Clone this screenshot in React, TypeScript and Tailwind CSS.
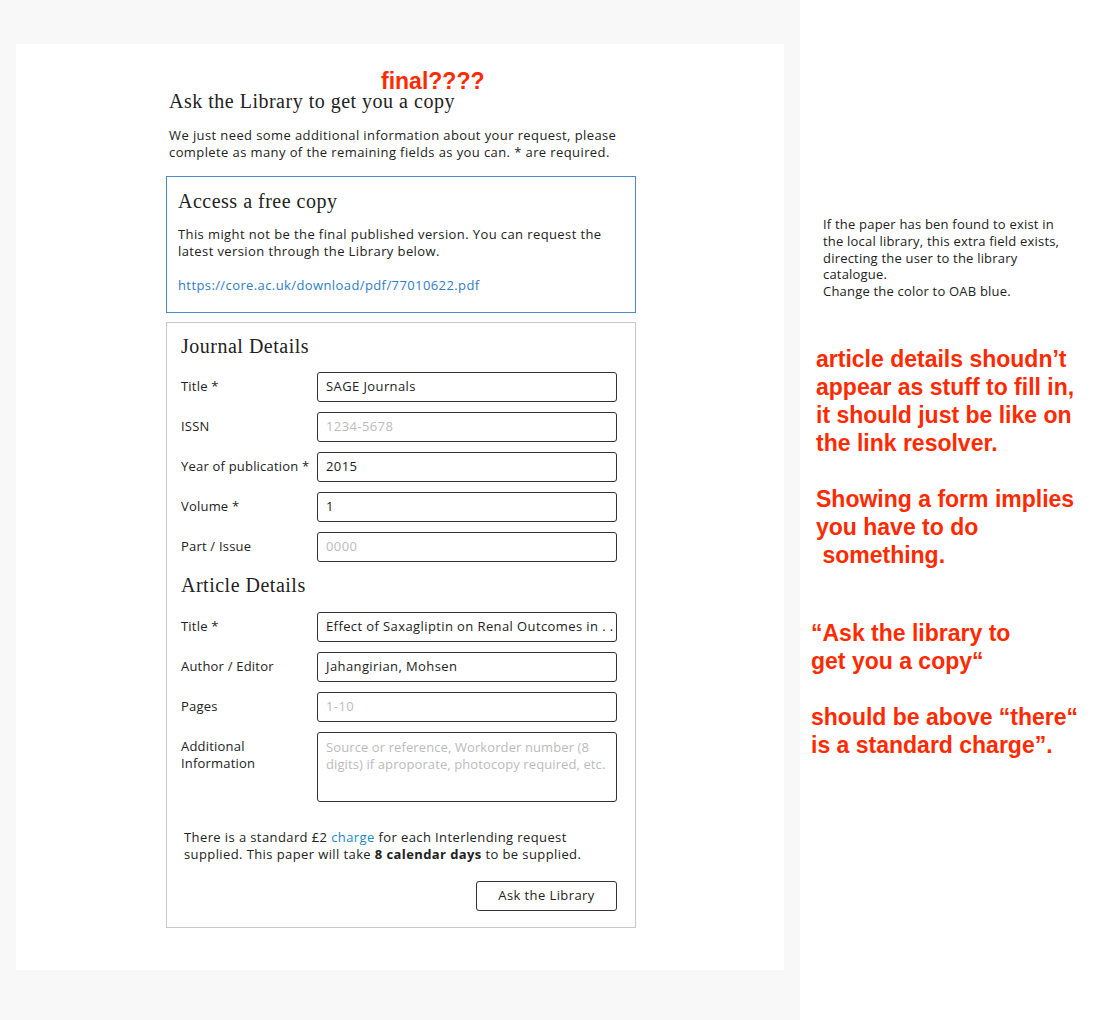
import React from "react";

const sans = "font-['Open_Sans','Noto_Sans',sans-serif] tracking-[0.4px]";
const serif = "font-['Liberation_Serif','DejaVu_Serif',serif] tracking-[0.5px]";
const red = "font-['Liberation_Sans',Arial,sans-serif] font-bold text-[23px] leading-[28px] tracking-normal text-[#ff2a00] whitespace-pre";

function Field({ label, value, placeholder }: { label: string; value?: string; placeholder?: string }) {
  return (
    <div className="flex items-center h-[30px]">
      <div className="w-[136px] text-[13px] text-[#222] tracking-[0.2px]">{label}</div>
      <div className="w-[300px] h-[30px] border border-[#333] rounded-[3px] px-[8px] flex items-center text-[13px] whitespace-nowrap overflow-hidden">
        {value ? <span className="text-[#222]">{value}</span> : <span className="text-[#bbb]">{placeholder}</span>}
      </div>
    </div>
  );
}

export default function App() {
  return (
    <div className={`flex w-[1100px] h-[1020px] bg-white ${sans}`}>
      <div className="w-[800px] h-[1020px] bg-[#f8f8f8] pt-[44px] pl-[16px]">
        <div className="relative w-[768px] h-[926px] bg-white pt-[45px] pl-[150px]">
          <div className="absolute left-[365px] top-[23px] font-['Liberation_Sans',Arial,sans-serif] font-bold text-[23px] leading-[28px] tracking-normal text-[#ff2a00]">
            final????
          </div>
          <div className="w-[470px]">
            <h1 className={`${serif} text-[20px] leading-[24px] text-[#222] pl-[3px]`}>Ask the Library to get you a copy</h1>
            <p className="mt-[14px] pl-[3px] text-[13px] leading-[17px] text-[#222]">
              We just need some additional information about your request, please complete as many of the remaining fields as you can. * are required.
            </p>
            <div className="mt-[15px] border border-[#4a8ccb] pl-[11px] pt-[12px] pb-[18px] pr-[10px]">
              <h2 className={`${serif} text-[20px] leading-[24px] text-[#222]`}>Access a free copy</h2>
              <p className="mt-[13px] text-[13px] leading-[17px] text-[#222]">
                This might not be the final published version. You can request the latest version through the Library below.
              </p>
              <p className="mt-[17px] text-[13px] leading-[17px] text-[#2f7ec4]">https://core.ac.uk/download/pdf/77010622.pdf</p>
            </div>
            <div className="mt-[9px] border border-[#c8c8c8] pl-[14px] pr-[18px] pt-[11px] pb-[16px]">
              <h2 className={`${serif} text-[20px] leading-[24px] text-[#222]`}>Journal Details</h2>
              <div className="mt-[14px] flex flex-col gap-[10px]">
                <Field label="Title *" value="SAGE Journals" />
                <Field label="ISSN" placeholder="1234-5678" />
                <Field label="Year of publication *" value="2015" />
                <Field label="Volume *" value="1" />
                <Field label="Part / Issue" placeholder="0000" />
              </div>
              <h2 className={`${serif} mt-[11px] text-[20px] leading-[24px] text-[#222]`}>Article Details</h2>
              <div className="mt-[15px] flex flex-col gap-[10px]">
                <Field label="Title *" value="Effect of Saxagliptin on Renal Outcomes in . ." />
                <Field label="Author / Editor" value="Jahangirian, Mohsen" />
                <Field label="Pages" placeholder="1-10" />
                <div className="flex">
                  <div className="w-[136px] pt-[6px] text-[13px] leading-[17px] text-[#222] tracking-[0.2px]">
                    Additional
                    <br />
                    Information
                  </div>
                  <div className="w-[300px] h-[70px] border border-[#333] rounded-[3px] pl-[8px] pr-[4px] pt-[6px] text-[13px] leading-[17px] tracking-[0.1px] text-[#bbb]">
                    Source or reference, Workorder number (8 digits) if aproporate, photocopy required, etc.
                  </div>
                </div>
              </div>
              <p className="mt-[27px] pl-[3px] w-[420px] text-[13px] leading-[17px] text-[#222]">
                There is a standard £2 <span className="text-[#1a86c4]">charge</span> for each Interlending request supplied. This paper will take <b className="font-bold">8 calendar days</b> to be supplied.
              </p>
              <div className="mt-[18px] flex justify-end">
                <button className="w-[141px] h-[30px] border border-[#333] rounded-[3px] text-[13px] text-[#222] bg-white">
                  Ask the Library
                </button>
              </div>
            </div>
          </div>
        </div>
      </div>
      <div className="w-[300px] pt-[216px] pl-[11px]">
        <p className="pl-[12px] text-[13px] leading-[16.75px] tracking-[0.2px] text-[#222] w-[252px]">
          If the paper has ben found to exist in the local library, this extra field exists, directing the user to the library catalogue.
          <br />
          Change the color to OAB blue.
        </p>
        <div className={`mt-[45px] pl-[5px] ${red}`}>
          {"article details shoudn\u2019t\nappear as stuff to fill in,\nit should just be like on\nthe link resolver.\n\nShowing a form implies\nyou have to do\n something."}
        </div>
        <div className={`mt-[50px] ${red}`}>
          {"\u201cAsk the library to\nget you a copy\u201c\n\nshould be above \u201cthere\u201c\nis a standard charge\u201d."}
        </div>
      </div>
    </div>
  );
}
